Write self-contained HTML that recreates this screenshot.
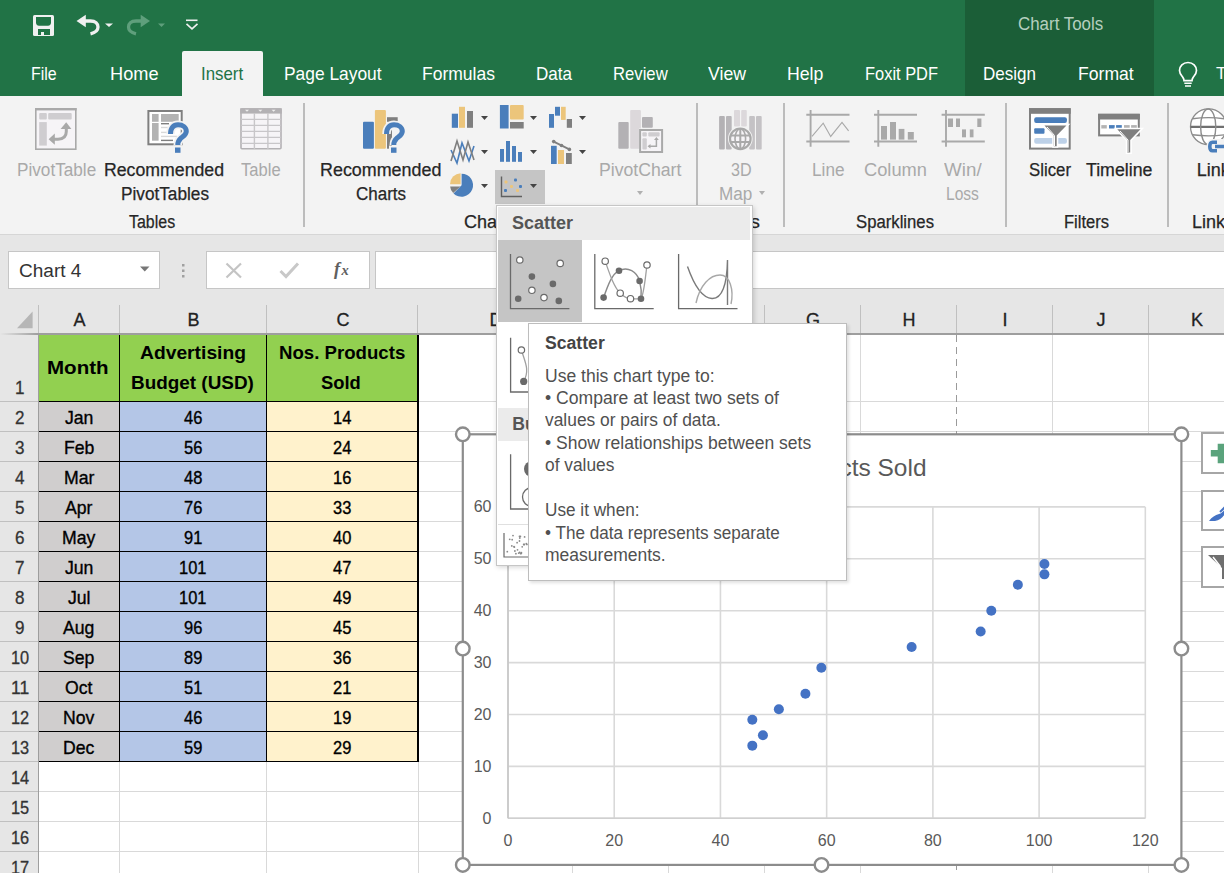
<!DOCTYPE html><html><head><meta charset="utf-8"><style>
html,body{margin:0;padding:0;}
body{width:1224px;height:873px;overflow:hidden;position:relative;background:#ffffff;font-family:"Liberation Sans",sans-serif;}
.t{position:absolute;white-space:nowrap;line-height:1;transform-origin:0 0;}
.r{position:absolute;box-sizing:border-box;}
.s{position:absolute;overflow:visible;}
</style></head><body>
<div class="r" style="left:0px;top:0px;width:1224px;height:96px;background:#217346;"></div>
<div class="r" style="left:965px;top:0px;width:189px;height:96px;background:#1b5e37;"></div>
<div class="r" style="left:182px;top:51px;width:81px;height:45px;background:#f3f3f3;border-radius:2px 2px 0 0;"></div>
<div class="t" style="left:31.40px;top:63.82px;font-size:19px;color:#ffffff;transform:scaleX(0.8394);">File</div>
<div class="t" style="left:110.30px;top:63.82px;font-size:19px;color:#ffffff;transform:scaleX(0.9569);">Home</div>
<div class="t" style="left:283.70px;top:63.82px;font-size:19px;color:#ffffff;transform:scaleX(0.9147);">Page Layout</div>
<div class="t" style="left:422.00px;top:63.82px;font-size:19px;color:#ffffff;transform:scaleX(0.9219);">Formulas</div>
<div class="t" style="left:535.70px;top:63.82px;font-size:19px;color:#ffffff;transform:scaleX(0.8970);">Data</div>
<div class="t" style="left:613.00px;top:63.82px;font-size:19px;color:#ffffff;transform:scaleX(0.8780);">Review</div>
<div class="t" style="left:708.00px;top:63.82px;font-size:19px;color:#ffffff;transform:scaleX(0.9304);">View</div>
<div class="t" style="left:787.30px;top:63.82px;font-size:19px;color:#ffffff;transform:scaleX(0.9315);">Help</div>
<div class="t" style="left:865.00px;top:63.82px;font-size:19px;color:#ffffff;transform:scaleX(0.8644);">Foxit PDF</div>
<div class="t" style="left:983.00px;top:63.82px;font-size:19px;color:#ffffff;transform:scaleX(0.8961);">Design</div>
<div class="t" style="left:1077.70px;top:63.82px;font-size:19px;color:#ffffff;transform:scaleX(0.9256);">Format</div>
<div class="t" style="left:200.70px;top:63.82px;font-size:19px;color:#217346;transform:scaleX(0.8860);">Insert</div>
<div class="t" style="left:1017.80px;top:15.06px;font-size:18px;color:#b5cfbf;transform:scaleX(0.9392);">Chart Tools</div>
<div class="t" style="left:1216.00px;top:65.41px;font-size:17px;color:#ffffff;">T</div>
<svg class="s" style="left:30px;top:12px;" width="200" height="28" viewBox="0 0 200 28">
<rect x="3" y="3" width="21" height="21" rx="1.5" fill="#f0f0f0"/>
<path d="M6 5 h15 v5.5 q0 3 -3 3.3 h-9 q-3 -.3 -3 -3.3 z" fill="#217346"/>
<path d="M8 17 h12 v6 h-6 v-3 h-3 v3 h-3 z" fill="#217346"/>
<path d="M46.5 9 L55.8 2.8 V15.2 Z" fill="#f0f0f0"/>
<path d="M54 9 H60.5 C65.5 9 68 11.8 68 15 C68 18.5 65.5 20.6 60.5 21.8" fill="none" stroke="#f0f0f0" stroke-width="3.3"/>
<path d="M75 11.5 h8 l-4 3.5 z" fill="#f0f0f0"/>
<path d="M120 9 L110.7 2.8 V15.2 Z" fill="#5f9f7c"/>
<path d="M112.5 9 H106 C101 9 98.5 11.8 98.5 15 C98.5 18.5 101 20.6 106 21.8" fill="none" stroke="#5f9f7c" stroke-width="3.3"/>
<path d="M128 11.5 h7 l-3.5 3.5 z" fill="#5f9f7c"/>
<path d="M156 8.3 h11.5" stroke="#f0f0f0" stroke-width="1.6"/>
<path d="M156.5 11.8 l5.5 5 l5.5 -5" fill="none" stroke="#f0f0f0" stroke-width="1.6"/>
</svg>
<svg class="s" style="left:1176px;top:60px;" width="24" height="28" viewBox="0 0 24 28"><path d="M12 2.5 c-5 0 -8.5 3.6 -8.5 8 c0 3.2 1.8 5 3.2 6.6 c1 1.2 1.3 2.3 1.3 3.5 h8 c0 -1.2 .3 -2.3 1.3 -3.5 c1.4 -1.6 3.2 -3.4 3.2 -6.6 c0 -4.4 -3.5 -8 -8.5 -8 z" fill="none" stroke="#fff" stroke-width="1.7"/>
<path d="M8.3 23.3 h7.4 M9 26 h6" stroke="#fff" stroke-width="1.6"/></svg>
<div class="r" style="left:0px;top:96px;width:1224px;height:139px;background:#f3f3f3;"></div>
<div class="r" style="left:0px;top:234px;width:1224px;height:1px;background:#d6d6d6;"></div>
<div class="r" style="left:0px;top:235px;width:1224px;height:70px;background:#e6e6e6;"></div>
<div class="r" style="left:302.5px;top:103px;width:2px;height:124px;background:#bcbcbc;"></div>
<div class="r" style="left:696px;top:103px;width:2px;height:124px;background:#bcbcbc;"></div>
<div class="r" style="left:783px;top:103px;width:2px;height:124px;background:#bcbcbc;"></div>
<div class="r" style="left:1005px;top:103px;width:2px;height:124px;background:#bcbcbc;"></div>
<div class="r" style="left:1167px;top:103px;width:2px;height:124px;background:#bcbcbc;"></div>
<div class="t" style="left:16.50px;top:160.56px;font-size:18px;color:#a9a9a9;transform:scaleX(0.9536);">PivotTable</div>
<div class="t" style="left:104.40px;top:160.56px;font-size:18px;color:#262626;transform:scaleX(0.9831);-webkit-text-stroke:0.25px #262626;">Recommended</div>
<div class="t" style="left:121.00px;top:184.56px;font-size:18px;color:#262626;transform:scaleX(0.9560);-webkit-text-stroke:0.25px #262626;">PivotTables</div>
<div class="t" style="left:241.00px;top:160.56px;font-size:18px;color:#a9a9a9;transform:scaleX(0.9202);">Table</div>
<div class="t" style="left:128.70px;top:212.56px;font-size:18px;color:#262626;transform:scaleX(0.8860);-webkit-text-stroke:0.25px #262626;">Tables</div>
<div class="t" style="left:319.60px;top:160.56px;font-size:18px;color:#262626;transform:scaleX(0.9945);-webkit-text-stroke:0.25px #262626;">Recommended</div>
<div class="t" style="left:356.00px;top:184.56px;font-size:18px;color:#262626;transform:scaleX(0.9431);-webkit-text-stroke:0.25px #262626;">Charts</div>
<div class="t" style="left:464.00px;top:212.56px;font-size:18px;color:#262626;-webkit-text-stroke:0.25px #262626;">Charts</div>
<div class="t" style="left:598.60px;top:160.56px;font-size:18px;color:#a9a9a9;transform:scaleX(0.9805);">PivotChart</div>
<div class="t" style="left:730.70px;top:160.56px;font-size:18px;color:#a9a9a9;transform:scaleX(0.8952);">3D</div>
<div class="t" style="left:718.70px;top:184.56px;font-size:18px;color:#a9a9a9;transform:scaleX(0.9510);">Map</div>
<div class="t" style="left:714.00px;top:212.56px;font-size:18px;color:#262626;transform:scaleX(1.0451);-webkit-text-stroke:0.25px #262626;">Tours</div>
<div class="t" style="left:812.30px;top:160.56px;font-size:18px;color:#a9a9a9;transform:scaleX(0.9550);">Line</div>
<div class="t" style="left:863.60px;top:160.56px;font-size:18px;color:#a9a9a9;transform:scaleX(1.0157);">Column</div>
<div class="t" style="left:944.40px;top:160.56px;font-size:18px;color:#a9a9a9;transform:scaleX(1.0444);">Win/</div>
<div class="t" style="left:946.30px;top:184.56px;font-size:18px;color:#a9a9a9;transform:scaleX(0.8653);">Loss</div>
<div class="t" style="left:856.00px;top:212.56px;font-size:18px;color:#262626;transform:scaleX(0.9281);-webkit-text-stroke:0.25px #262626;">Sparklines</div>
<div class="t" style="left:1029.00px;top:160.56px;font-size:18px;color:#262626;transform:scaleX(0.9331);-webkit-text-stroke:0.25px #262626;">Slicer</div>
<div class="t" style="left:1085.60px;top:160.56px;font-size:18px;color:#262626;transform:scaleX(0.9858);-webkit-text-stroke:0.25px #262626;">Timeline</div>
<div class="t" style="left:1064.40px;top:212.56px;font-size:18px;color:#262626;transform:scaleX(0.9184);-webkit-text-stroke:0.25px #262626;">Filters</div>
<div class="t" style="left:1196.70px;top:160.56px;font-size:18px;color:#262626;-webkit-text-stroke:0.25px #262626;">Link</div>
<div class="t" style="left:1192.00px;top:212.56px;font-size:18px;color:#262626;-webkit-text-stroke:0.25px #262626;">Links</div>
<svg class="s" style="left:636.5px;top:190.8px;" width="6" height="4" viewBox="0 0 6 4"><path d="M0 0 h6 l-3.0 4 z" fill="#b0b0b0"/></svg>
<svg class="s" style="left:758.5px;top:190.8px;" width="6" height="4" viewBox="0 0 6 4"><path d="M0 0 h6 l-3.0 4 z" fill="#b0b0b0"/></svg>
<svg class="s" style="left:0px;top:0px;" width="1224" height="240" viewBox="0 0 1224 240">
<!-- PivotTable disabled -->
<rect x="35.8" y="108.8" width="40" height="40.4" fill="#f6f4f7" stroke="#a9a9a9" stroke-width="1.6"/>
<rect x="35" y="108" width="41.6" height="2.4" fill="#a9a9a9"/>
<rect x="39.2" y="113" width="7.6" height="6.6" rx="1" fill="#cfcdd0"/>
<rect x="48.2" y="113" width="23.5" height="6.6" rx="1" fill="#cfcdd0"/>
<rect x="39.2" y="122.1" width="7.6" height="23.5" fill="#cfcdd0"/>
<path d="M66.3 125 V131.5 Q66.3 139 58 139.3 H51" fill="none" stroke="#a9a9a9" stroke-width="3"/>
<path d="M60.6 129 L66.2 122.2 L71.4 129 Z" fill="#a9a9a9"/>
<path d="M54.8 133.6 L48.6 139.2 L54.8 144.8 Z" fill="#a9a9a9"/>
<!-- Recommended PivotTables -->
<rect x="148.4" y="111" width="33.3" height="33.3" fill="#fff" stroke="#7f7f7f" stroke-width="2"/>
<rect x="152" y="114" width="6.6" height="7.8" fill="#b3b3b3"/>
<rect x="161" y="114" width="17.7" height="7.8" fill="#b3b3b3"/>
<rect x="152" y="123" width="6.6" height="17.7" fill="#b3b3b3"/>
<rect x="161" y="123" width="8" height="1.4" fill="#7f7f7f"/>
<rect x="161" y="126.8" width="7" height="1.4" fill="#d9d9d9"/>
<rect x="161" y="131.7" width="6" height="1.4" fill="#d9d9d9"/>
<rect x="161" y="135.7" width="16" height="1.4" fill="#d9d9d9"/>
<rect x="161" y="139.7" width="12" height="1.4" fill="#7f7f7f"/>
<rect x="166" y="122" width="26" height="33" fill="#f3f3f3" opacity="0"/>
<path d="M170.5 134 C170.5 128 173.5 124.8 178 124.8 C183 124.8 186.3 127.6 186.3 131.3 C186.3 135.3 182.5 136.6 180.5 138.6 C178.7 140.3 177.8 141.3 177.8 145" fill="none" stroke="#f3f3f3" stroke-width="8.5" stroke-linejoin="round"/><rect x="173" y="145.5" width="9.5" height="9.3" fill="#f3f3f3"/>
<path d="M170.5 134 C170.5 128 173.5 124.8 178 124.8 C183 124.8 186.3 127.6 186.3 131.3 C186.3 135.3 182.5 136.6 180.5 138.6 C178.7 140.3 177.8 141.3 177.8 145" fill="none" stroke="#4a7ebb" stroke-width="5"/><rect x="175" y="147.5" width="5.5" height="5.3" fill="#4a7ebb"/>
<!-- Recommended Charts -->
<rect x="363" y="121.8" width="10.9" height="26.9" rx="1" fill="#4a7ebb"/>
<rect x="374.9" y="109.9" width="11" height="38.8" rx="1" fill="#ecc57b"/>
<rect x="387" y="117.2" width="10.7" height="4.6" fill="#7f7f7f"/>
<path d="M387 124 H392 V148.7 H387 Z" fill="#7f7f7f"/>
<path d="M386.5 134 C386.5 128 389.5 124.8 394 124.8 C399 124.8 402.3 127.6 402.3 131.3 C402.3 135.3 398.5 136.6 396.5 138.6 C394.7 140.3 393.8 141.3 393.8 145" fill="none" stroke="#f3f3f3" stroke-width="8.5" stroke-linejoin="round"/><rect x="389" y="145.5" width="9.5" height="9.3" fill="#f3f3f3"/>
<path d="M386.5 134 C386.5 128 389.5 124.8 394 124.8 C399 124.8 402.3 127.6 402.3 131.3 C402.3 135.3 398.5 136.6 396.5 138.6 C394.7 140.3 393.8 141.3 393.8 145" fill="none" stroke="#4a7ebb" stroke-width="5"/><rect x="391" y="147.5" width="5.5" height="5.3" fill="#4a7ebb"/>
<!-- small chart icons row1 -->
<rect x="451.8" y="113.7" width="6.2" height="14.1" fill="#4a7ebb"/>
<rect x="459" y="106.8" width="6" height="21" fill="#ecc57b"/>
<rect x="467" y="111" width="6" height="16.8" fill="#7f7f7f"/>
<rect x="499.9" y="105" width="8.7" height="23.5" fill="#4a7ebb"/>
<rect x="510" y="105" width="13.7" height="14.6" rx="1" fill="#ecc57b"/>
<rect x="510" y="122" width="13.7" height="6.5" fill="#7f7f7f"/>
<rect x="549" y="114" width="5" height="13.8" fill="#4a7ebb"/>
<rect x="555" y="106.8" width="5" height="8.9" fill="#4a7ebb"/>
<rect x="561" y="106.8" width="4.7" height="13.1" fill="#ecc57b"/>
<rect x="566.8" y="119" width="5.2" height="8.8" fill="#7f7f7f"/>
<!-- row2 -->
<path d="M451 150 L457 163 L462 143 L469 161 L474 146" fill="none" stroke="#4a7ebb" stroke-width="1.6"/>
<path d="M451 161 L457 141 L463 160 L468 142 L474 160" fill="none" stroke="#7f7f7f" stroke-width="1.6"/>
<rect x="500" y="149" width="4" height="12.8" fill="#4a7ebb"/>
<rect x="506" y="141" width="4" height="20.8" fill="#4a7ebb"/>
<rect x="512" y="146" width="4" height="15.8" fill="#4a7ebb"/>
<rect x="518" y="152" width="4" height="9.8" fill="#4a7ebb"/>
<rect x="551" y="145.8" width="5.7" height="18.2" fill="#4a7ebb"/>
<rect x="558" y="150" width="6" height="14" fill="#ecc57b"/>
<rect x="566" y="153" width="5.8" height="11" fill="#7f7f7f"/>
<path d="M553.7 141.6 L569.4 149.4" stroke="#7f7f7f" stroke-width="1.8"/>
<circle cx="553.7" cy="141.6" r="1.8" fill="#7f7f7f"/><circle cx="561.5" cy="145.5" r="1.8" fill="#7f7f7f"/><circle cx="569.4" cy="149.4" r="1.8" fill="#7f7f7f"/>
<!-- row3 pie -->
<path d="M461.6 185.2 L461.6 173.7 A11.5 11.5 0 1 1 453.5 193.4 Z" fill="#4a7ebb"/>
<path d="M460.6 184.2 L460.6 173.2 A11 11 0 0 0 450 184.2 Z" fill="#ecc57b"/>
<path d="M460.4 186.4 L450.1 186.4 A11 11 0 0 0 453.2 193 Z" fill="#7f7f7f"/>
<!-- scatter button highlight -->
<rect x="495" y="170" width="50" height="34" fill="#c5c5c5"/>
<path d="M501.5 176.5 V196.5 H522" fill="none" stroke="#606060" stroke-width="1.4"/>
<rect x="504.5" y="180.5" width="3" height="3" rx="1" fill="#ecc57b"/>
<rect x="510" y="185" width="3" height="3" rx="1" fill="#ecc57b"/>
<rect x="516" y="189" width="3" height="3" rx="1" fill="#ecc57b"/>
<rect x="514" y="178.5" width="3" height="3" rx="1" fill="#4a7ebb"/>
<rect x="519" y="185" width="3" height="3" rx="1" fill="#4a7ebb"/>
<rect x="504" y="189" width="3" height="3" rx="1" fill="#4a7ebb"/>
<!-- PivotChart disabled -->
<rect x="618.3" y="121.9" width="10.4" height="26.8" rx="1" fill="#b3b1b4"/>
<rect x="630.2" y="110" width="10.7" height="38.7" rx="1" fill="#dcd8db"/>
<rect x="642" y="117.1" width="10.8" height="10.7" rx="1" fill="#b3b1b4"/>
<rect x="639" y="128.5" width="24.5" height="24.5" fill="#f3f3f3"/>
<rect x="640.1" y="130" width="22" height="22" fill="#f6f4f7" stroke="#a9a9a9" stroke-width="2"/>
<rect x="642.4" y="132.3" width="4.4" height="4.2" rx="1" fill="#cfcdd0"/>
<rect x="648.3" y="132.3" width="11.3" height="4.2" rx="1" fill="#cfcdd0"/>
<rect x="642.4" y="138.2" width="4.4" height="11.4" rx="1" fill="#cfcdd0"/>
<path d="M656.4 139.5 V146.3 H649.5" fill="none" stroke="#a9a9a9" stroke-width="1.5"/>
<path d="M654 140 L656.4 137 L658.8 140 Z M650.5 144 L647.5 146.3 L650.5 148.6 Z" fill="#a9a9a9"/>
<!-- 3D Map disabled -->
<rect x="719.1" y="115.9" width="5.7" height="33.7" rx="1" fill="#b3b1b4"/>
<rect x="726" y="115.9" width="5.7" height="33.7" rx="1" fill="#b8b6b9"/>
<rect x="734" y="110" width="6" height="16.6" rx="1" fill="#dcd8db"/>
<rect x="741.2" y="110" width="5.6" height="16.6" rx="1" fill="#dcd8db"/>
<rect x="749.2" y="115.9" width="5.7" height="33.7" rx="1" fill="#c4c2c5"/>
<rect x="756" y="115.9" width="5.7" height="33.7" rx="1" fill="#c4c2c5"/>
<circle cx="740.3" cy="138.8" r="12.3" fill="#f3f3f3"/>
<circle cx="740.3" cy="138.8" r="10.3" fill="#f6f4f7" stroke="#a9a9a9" stroke-width="2.2"/>
<path d="M730 135.5 H750.6 M730 142 H750.6 M740.3 128.5 V149" stroke="#a9a9a9" stroke-width="2"/>
<ellipse cx="740.3" cy="138.8" rx="5.3" ry="10" fill="none" stroke="#a9a9a9" stroke-width="1.6"/>
<!-- sparklines disabled -->
<g stroke="#a9a9a9" fill="none" stroke-width="1.9">
<path d="M806.3 114.8 H849.5 M806.3 141.5 H849.5 M810.6 110 V146.7"/>
<path d="M874 114.8 H917 M874 141.5 H917 M878.3 110 V146.7"/>
<path d="M941.6 114.8 H984.8 M941.6 141.5 H984.8 M946 110 V146.7"/>
<path d="M812 136.4 L823.2 123.2 L830.7 136.4 L842 122.3 L848.6 130.8" stroke-width="1.1"/>
</g>
<g fill="#a9a9a9">
<rect x="881" y="126" width="6" height="13.6"/><rect x="890" y="122" width="6" height="17.6"/><rect x="898.7" y="128.9" width="5.7" height="10.7"/><rect x="907.8" y="132" width="6" height="7.6"/>
<rect x="948" y="118.5" width="5" height="8.5"/><rect x="956" y="118.5" width="4" height="8.5"/><rect x="962" y="129.4" width="4" height="7.9"/><rect x="969.8" y="129.4" width="3.7" height="7.9"/><rect x="977.3" y="118.5" width="4.1" height="8.5"/>
</g>
<!-- Slicer -->
<rect x="1030" y="109.2" width="39.7" height="39.4" fill="#fff" stroke="#7f7f7f" stroke-width="2"/>
<rect x="1029" y="108.2" width="41.7" height="5.6" fill="#7f7f7f"/>
<rect x="1034.2" y="117.2" width="32.7" height="5.7" rx="2" fill="#4a7ebb"/>
<rect x="1034.2" y="128.2" width="10.3" height="5.6" rx="1" fill="#4a7ebb"/>
<rect x="1034.2" y="137.9" width="32.7" height="5.8" rx="2" fill="#bdd1e8"/>
<path d="M1042.5 124.6 H1068.5 L1057.5 135.8 V147 H1053 V135.8 Z" fill="#7f7f7f" stroke="#fff" stroke-width="1.6"/><path d="M1047 127 L1054.5 135.5 V146" fill="none" stroke="#fff" stroke-width="1"/>
<!-- Timeline -->
<rect x="1099.1" y="114.8" width="39.7" height="20.6" fill="#fff" stroke="#7f7f7f" stroke-width="2"/>
<rect x="1098.1" y="113.8" width="41.7" height="5.7" fill="#7f7f7f"/>
<rect x="1101.3" y="125.1" width="5.5" height="3.4" fill="#b3b3b3"/>
<rect x="1109" y="125.1" width="5.7" height="3.4" fill="#4a7ebb"/>
<rect x="1116.1" y="125.1" width="5.7" height="3.4" fill="#4a7ebb"/>
<rect x="1124" y="125.1" width="5.7" height="3.4" fill="#b3b3b3"/>
<rect x="1131.1" y="125.1" width="5.7" height="3.4" fill="#b3b3b3"/>
<path d="M1115.5 128.5 H1142.3 L1131 140.3 V153.2 H1126.5 V140.3 Z" fill="#7f7f7f" stroke="#fff" stroke-width="1.6"/><path d="M1120 131 L1128 140 V152" fill="none" stroke="#fff" stroke-width="1"/>
<!-- Links globe -->
<circle cx="1208.5" cy="126.8" r="18" fill="#ffffff" stroke="#8c8c8c" stroke-width="1.3"/>
<path d="M1190.5 126.8 H1226.5" stroke="#707070" stroke-width="2.2"/>
<path d="M1192.5 118.8 Q1208.5 116.5 1224.5 118.8 M1192.5 134.8 Q1208.5 137 1224.5 134.8" fill="none" stroke="#8c8c8c" stroke-width="1.4"/>
<ellipse cx="1208.2" cy="126.8" rx="7.6" ry="17.8" fill="none" stroke="#8c8c8c" stroke-width="1.4"/>
<path d="M1213 140 H1222 Q1227 140 1227 146.5 Q1227 153 1222 153 H1213 Q1207.5 153 1207.5 146.5 Q1207.5 140 1213 140 Z" fill="#f3f3f3" stroke="#f3f3f3" stroke-width="2"/>
<path d="M1217 142.3 H1212.5 Q1209.8 142.3 1209.8 146.5 Q1209.8 150.7 1212.5 150.7 H1217 M1215 146.5 H1224" fill="none" stroke="#4a7ebb" stroke-width="3.6"/>
</svg>
<svg class="s" style="left:480.5px;top:115.5px;" width="7" height="4" viewBox="0 0 7 4"><path d="M0 0 h7 l-3.5 4 z" fill="#444444"/></svg>
<svg class="s" style="left:529.8px;top:115.5px;" width="7" height="4" viewBox="0 0 7 4"><path d="M0 0 h7 l-3.5 4 z" fill="#444444"/></svg>
<svg class="s" style="left:579.0px;top:115.5px;" width="7" height="4" viewBox="0 0 7 4"><path d="M0 0 h7 l-3.5 4 z" fill="#444444"/></svg>
<svg class="s" style="left:480.5px;top:150px;" width="7" height="4" viewBox="0 0 7 4"><path d="M0 0 h7 l-3.5 4 z" fill="#444444"/></svg>
<svg class="s" style="left:529.8px;top:150px;" width="7" height="4" viewBox="0 0 7 4"><path d="M0 0 h7 l-3.5 4 z" fill="#444444"/></svg>
<svg class="s" style="left:579.0px;top:150px;" width="7" height="4" viewBox="0 0 7 4"><path d="M0 0 h7 l-3.5 4 z" fill="#444444"/></svg>
<svg class="s" style="left:480.5px;top:183.5px;" width="7" height="4" viewBox="0 0 7 4"><path d="M0 0 h7 l-3.5 4 z" fill="#444444"/></svg>
<svg class="s" style="left:529.8px;top:183.5px;" width="7" height="4" viewBox="0 0 7 4"><path d="M0 0 h7 l-3.5 4 z" fill="#444444"/></svg>
<svg class="s" style="left:0px;top:0px;" width="1224" height="240" viewBox="0 0 1224 240">
<rect x="241" y="109" width="40" height="39.8" rx="1" fill="#f6f4f7" stroke="#b3b1b4" stroke-width="1.6"/>
<rect x="240.2" y="108.2" width="41.6" height="5.4" fill="#b3b1b4"/>
<path d="M254.4 113 V149 M267.9 113 V149" stroke="#c8c6c9" stroke-width="1.4"/>
<path d="M241 119.3 H281 M241 125.4 H281 M241 131.4 H281 M241 137.4 H281 M241 143.3 H281" stroke="#c8c6c9" stroke-width="1.2"/>
<path d="M245 109.8 h4 l-2 2 z M258.3 109.8 h4 l-2 2 z M271.6 109.8 h4 l-2 2 z" fill="#eeeeee"/>
</svg>
<div class="r" style="left:8px;top:251px;width:152px;height:38px;background:#ffffff;border:1px solid #c6c6c6;"></div>
<div class="t" style="left:19.30px;top:262.46px;font-size:18px;color:#333333;transform:scaleX(1.0571);">Chart 4</div>
<svg class="s" style="left:140px;top:266px;" width="10" height="6" viewBox="0 0 10 6"><path d="M0 0.5 H9.5 L4.75 5.5 Z" fill="#777"/></svg>
<svg class="s" style="left:181px;top:262px;" width="5" height="17" viewBox="0 0 5 17"><rect x="1" y="2" width="2.5" height="2.5" fill="#a0a0a0"/><rect x="1" y="7.5" width="2.5" height="2.5" fill="#a0a0a0"/><rect x="1" y="13" width="2.5" height="2.5" fill="#a0a0a0"/></svg>
<div class="r" style="left:206px;top:251px;width:164px;height:38px;background:#ffffff;border:1px solid #c6c6c6;"></div>
<svg class="s" style="left:220px;top:257px;" width="140" height="26" viewBox="0 0 140 26"><path d="M6.5 6.5 L21 20.5 M21 6.5 L6.5 20.5" stroke="#c4c4c4" stroke-width="2.2"/>
<path d="M60.5 14 L66 19.5 L78 6.5" fill="none" stroke="#c8c8c8" stroke-width="3"/></svg>
<div class="t" style="left:334.00px;top:259.76px;font-size:18px;color:#606060;font-weight:bold;font-family:'Liberation Serif',serif;font-style:italic;">f</div>
<div class="t" style="left:341.50px;top:263.23px;font-size:14.5px;color:#606060;font-weight:bold;font-family:'Liberation Serif',serif;font-style:italic;">x</div>
<div class="r" style="left:375px;top:251px;width:900px;height:38px;background:#ffffff;border:1px solid #c6c6c6;"></div>
<div class="r" style="left:0px;top:305px;width:1224px;height:28px;background:#e6e6e6;"></div>
<div class="r" style="left:0px;top:335px;width:38px;height:538px;background:#e6e6e6;"></div>
<div class="r" style="left:38px;top:333px;width:1186px;height:2px;background:#9e9e9e;"></div>
<div class="r" style="left:0px;top:333px;width:38px;height:2px;background:linear-gradient(to right,#e6e6e6,#9e9e9e);"></div>
<div class="r" style="left:38px;top:305px;width:1px;height:28px;background:#c0c0c0;"></div>
<div class="r" style="left:119px;top:305px;width:1px;height:28px;background:#c0c0c0;"></div>
<div class="r" style="left:266px;top:305px;width:1px;height:28px;background:#c0c0c0;"></div>
<div class="r" style="left:417px;top:305px;width:1px;height:28px;background:#c0c0c0;"></div>
<div class="r" style="left:572px;top:305px;width:1px;height:28px;background:#c0c0c0;"></div>
<div class="r" style="left:668px;top:305px;width:1px;height:28px;background:#c0c0c0;"></div>
<div class="r" style="left:764px;top:305px;width:1px;height:28px;background:#c0c0c0;"></div>
<div class="r" style="left:860px;top:305px;width:1px;height:28px;background:#c0c0c0;"></div>
<div class="r" style="left:956px;top:305px;width:1px;height:28px;background:#c0c0c0;"></div>
<div class="r" style="left:1052px;top:305px;width:1px;height:28px;background:#c0c0c0;"></div>
<div class="r" style="left:1148px;top:305px;width:1px;height:28px;background:#c0c0c0;"></div>
<div class="r" style="left:1244px;top:305px;width:1px;height:28px;background:#c0c0c0;"></div>
<div class="r" style="left:38px;top:335px;width:1px;height:538px;background:#9e9e9e;"></div>
<svg class="s" style="left:16px;top:311px;" width="18" height="18" viewBox="0 0 18 18"><path d="M1 17.3 L16.6 0.6 V17.3 Z" fill="#b6b6b6"/></svg>
<div class="t" style="left:73.50px;top:310.76px;font-size:18px;color:#222222;transform:scaleX(1.0000);-webkit-text-stroke:0.3px #222;">A</div>
<div class="t" style="left:187.50px;top:310.76px;font-size:18px;color:#222222;transform:scaleX(1.0000);-webkit-text-stroke:0.3px #222;">B</div>
<div class="t" style="left:336.50px;top:310.76px;font-size:18px;color:#222222;transform:scaleX(1.0000);-webkit-text-stroke:0.3px #222;">C</div>
<div class="t" style="left:489.50px;top:310.76px;font-size:18px;color:#222222;transform:scaleX(1.0000);-webkit-text-stroke:0.3px #222;">D</div>
<div class="t" style="left:615.00px;top:310.76px;font-size:18px;color:#222222;transform:scaleX(1.0000);-webkit-text-stroke:0.3px #222;">E</div>
<div class="t" style="left:711.50px;top:310.76px;font-size:18px;color:#222222;transform:scaleX(1.0000);-webkit-text-stroke:0.3px #222;">F</div>
<div class="t" style="left:806.00px;top:310.76px;font-size:18px;color:#222222;transform:scaleX(1.0000);-webkit-text-stroke:0.3px #222;">G</div>
<div class="t" style="left:902.50px;top:310.76px;font-size:18px;color:#222222;transform:scaleX(1.0000);-webkit-text-stroke:0.3px #222;">H</div>
<div class="t" style="left:1002.50px;top:310.76px;font-size:18px;color:#222222;transform:scaleX(1.0000);-webkit-text-stroke:0.3px #222;">I</div>
<div class="t" style="left:1096.50px;top:310.76px;font-size:18px;color:#222222;transform:scaleX(1.0000);-webkit-text-stroke:0.3px #222;">J</div>
<div class="t" style="left:1191.00px;top:310.76px;font-size:18px;color:#222222;transform:scaleX(1.0000);-webkit-text-stroke:0.3px #222;">K</div>
<div class="r" style="left:39px;top:401px;width:1185px;height:1px;background:#d9d9d9;"></div>
<div class="r" style="left:0px;top:401px;width:38px;height:1px;background:#c0c0c0;"></div>
<div class="r" style="left:39px;top:431px;width:1185px;height:1px;background:#d9d9d9;"></div>
<div class="r" style="left:0px;top:431px;width:38px;height:1px;background:#c0c0c0;"></div>
<div class="r" style="left:39px;top:461px;width:1185px;height:1px;background:#d9d9d9;"></div>
<div class="r" style="left:0px;top:461px;width:38px;height:1px;background:#c0c0c0;"></div>
<div class="r" style="left:39px;top:491px;width:1185px;height:1px;background:#d9d9d9;"></div>
<div class="r" style="left:0px;top:491px;width:38px;height:1px;background:#c0c0c0;"></div>
<div class="r" style="left:39px;top:521px;width:1185px;height:1px;background:#d9d9d9;"></div>
<div class="r" style="left:0px;top:521px;width:38px;height:1px;background:#c0c0c0;"></div>
<div class="r" style="left:39px;top:551px;width:1185px;height:1px;background:#d9d9d9;"></div>
<div class="r" style="left:0px;top:551px;width:38px;height:1px;background:#c0c0c0;"></div>
<div class="r" style="left:39px;top:581px;width:1185px;height:1px;background:#d9d9d9;"></div>
<div class="r" style="left:0px;top:581px;width:38px;height:1px;background:#c0c0c0;"></div>
<div class="r" style="left:39px;top:611px;width:1185px;height:1px;background:#d9d9d9;"></div>
<div class="r" style="left:0px;top:611px;width:38px;height:1px;background:#c0c0c0;"></div>
<div class="r" style="left:39px;top:641px;width:1185px;height:1px;background:#d9d9d9;"></div>
<div class="r" style="left:0px;top:641px;width:38px;height:1px;background:#c0c0c0;"></div>
<div class="r" style="left:39px;top:671px;width:1185px;height:1px;background:#d9d9d9;"></div>
<div class="r" style="left:0px;top:671px;width:38px;height:1px;background:#c0c0c0;"></div>
<div class="r" style="left:39px;top:701px;width:1185px;height:1px;background:#d9d9d9;"></div>
<div class="r" style="left:0px;top:701px;width:38px;height:1px;background:#c0c0c0;"></div>
<div class="r" style="left:39px;top:731px;width:1185px;height:1px;background:#d9d9d9;"></div>
<div class="r" style="left:0px;top:731px;width:38px;height:1px;background:#c0c0c0;"></div>
<div class="r" style="left:39px;top:761px;width:1185px;height:1px;background:#d9d9d9;"></div>
<div class="r" style="left:0px;top:761px;width:38px;height:1px;background:#c0c0c0;"></div>
<div class="r" style="left:39px;top:791px;width:1185px;height:1px;background:#d9d9d9;"></div>
<div class="r" style="left:0px;top:791px;width:38px;height:1px;background:#c0c0c0;"></div>
<div class="r" style="left:39px;top:821px;width:1185px;height:1px;background:#d9d9d9;"></div>
<div class="r" style="left:0px;top:821px;width:38px;height:1px;background:#c0c0c0;"></div>
<div class="r" style="left:39px;top:851px;width:1185px;height:1px;background:#d9d9d9;"></div>
<div class="r" style="left:0px;top:851px;width:38px;height:1px;background:#c0c0c0;"></div>
<div class="r" style="left:39px;top:881px;width:1185px;height:1px;background:#d9d9d9;"></div>
<div class="r" style="left:0px;top:881px;width:38px;height:1px;background:#c0c0c0;"></div>
<div class="r" style="left:119px;top:335px;width:1px;height:538px;background:#d9d9d9;"></div>
<div class="r" style="left:266px;top:335px;width:1px;height:538px;background:#d9d9d9;"></div>
<div class="r" style="left:418px;top:335px;width:1px;height:538px;background:#d9d9d9;"></div>
<div class="r" style="left:572px;top:335px;width:1px;height:538px;background:#d9d9d9;"></div>
<div class="r" style="left:668px;top:335px;width:1px;height:538px;background:#d9d9d9;"></div>
<div class="r" style="left:764px;top:335px;width:1px;height:538px;background:#d9d9d9;"></div>
<div class="r" style="left:860px;top:335px;width:1px;height:538px;background:#d9d9d9;"></div>
<div class="r" style="left:956px;top:335px;width:1px;height:538px;background:repeating-linear-gradient(to bottom,#9a9a9a 0 7px,#ffffff 7px 12px);"></div>
<div class="r" style="left:1052px;top:335px;width:1px;height:538px;background:#d9d9d9;"></div>
<div class="r" style="left:1148px;top:335px;width:1px;height:538px;background:#d9d9d9;"></div>
<div class="r" style="left:1244px;top:335px;width:1px;height:538px;background:#d9d9d9;"></div>
<div class="t" style="left:14.75px;top:379.06px;font-size:18.6px;color:#333333;transform:scaleX(0.9183);-webkit-text-stroke:0.3px #333;">1</div>
<div class="t" style="left:14.75px;top:409.06px;font-size:18.6px;color:#333333;transform:scaleX(0.9183);-webkit-text-stroke:0.3px #333;">2</div>
<div class="t" style="left:14.75px;top:439.06px;font-size:18.6px;color:#333333;transform:scaleX(0.9183);-webkit-text-stroke:0.3px #333;">3</div>
<div class="t" style="left:14.75px;top:469.06px;font-size:18.6px;color:#333333;transform:scaleX(0.9183);-webkit-text-stroke:0.3px #333;">4</div>
<div class="t" style="left:14.75px;top:499.06px;font-size:18.6px;color:#333333;transform:scaleX(0.9183);-webkit-text-stroke:0.3px #333;">5</div>
<div class="t" style="left:14.75px;top:529.06px;font-size:18.6px;color:#333333;transform:scaleX(0.9183);-webkit-text-stroke:0.3px #333;">6</div>
<div class="t" style="left:14.75px;top:559.06px;font-size:18.6px;color:#333333;transform:scaleX(0.9183);-webkit-text-stroke:0.3px #333;">7</div>
<div class="t" style="left:14.75px;top:589.06px;font-size:18.6px;color:#333333;transform:scaleX(0.9183);-webkit-text-stroke:0.3px #333;">8</div>
<div class="t" style="left:14.75px;top:619.06px;font-size:18.6px;color:#333333;transform:scaleX(0.9183);-webkit-text-stroke:0.3px #333;">9</div>
<div class="t" style="left:11.40px;top:649.06px;font-size:18.6px;color:#333333;transform:scaleX(0.8797);-webkit-text-stroke:0.3px #333;">10</div>
<div class="t" style="left:11.40px;top:679.06px;font-size:18.6px;color:#333333;transform:scaleX(0.9426);-webkit-text-stroke:0.3px #333;">11</div>
<div class="t" style="left:11.40px;top:709.06px;font-size:18.6px;color:#333333;transform:scaleX(0.8797);-webkit-text-stroke:0.3px #333;">12</div>
<div class="t" style="left:11.40px;top:739.06px;font-size:18.6px;color:#333333;transform:scaleX(0.8797);-webkit-text-stroke:0.3px #333;">13</div>
<div class="t" style="left:11.40px;top:769.06px;font-size:18.6px;color:#333333;transform:scaleX(0.8797);-webkit-text-stroke:0.3px #333;">14</div>
<div class="t" style="left:11.40px;top:799.06px;font-size:18.6px;color:#333333;transform:scaleX(0.8797);-webkit-text-stroke:0.3px #333;">15</div>
<div class="t" style="left:11.40px;top:829.06px;font-size:18.6px;color:#333333;transform:scaleX(0.8797);-webkit-text-stroke:0.3px #333;">16</div>
<div class="t" style="left:11.40px;top:859.06px;font-size:18.6px;color:#333333;transform:scaleX(0.8797);-webkit-text-stroke:0.3px #333;">17</div>
<div class="r" style="left:39px;top:335px;width:380px;height:66px;background:#92d050;"></div>
<div class="r" style="left:39px;top:402px;width:80px;height:360px;background:#d0cece;"></div>
<div class="r" style="left:120px;top:402px;width:146px;height:360px;background:#b4c6e7;"></div>
<div class="r" style="left:267px;top:402px;width:151px;height:360px;background:#fff2cc;"></div>
<div class="r" style="left:39px;top:401px;width:380px;height:1px;background:#000000;"></div>
<div class="r" style="left:39px;top:431px;width:380px;height:1px;background:#000000;"></div>
<div class="r" style="left:39px;top:461px;width:380px;height:1px;background:#000000;"></div>
<div class="r" style="left:39px;top:491px;width:380px;height:1px;background:#000000;"></div>
<div class="r" style="left:39px;top:521px;width:380px;height:1px;background:#000000;"></div>
<div class="r" style="left:39px;top:551px;width:380px;height:1px;background:#000000;"></div>
<div class="r" style="left:39px;top:581px;width:380px;height:1px;background:#000000;"></div>
<div class="r" style="left:39px;top:611px;width:380px;height:1px;background:#000000;"></div>
<div class="r" style="left:39px;top:641px;width:380px;height:1px;background:#000000;"></div>
<div class="r" style="left:39px;top:671px;width:380px;height:1px;background:#000000;"></div>
<div class="r" style="left:39px;top:701px;width:380px;height:1px;background:#000000;"></div>
<div class="r" style="left:39px;top:731px;width:380px;height:1px;background:#000000;"></div>
<div class="r" style="left:39px;top:761px;width:380px;height:1px;background:#000000;"></div>
<div class="r" style="left:119px;top:335px;width:1px;height:427px;background:#000000;"></div>
<div class="r" style="left:266px;top:335px;width:1px;height:427px;background:#000000;"></div>
<div class="r" style="left:417px;top:335px;width:2px;height:427px;background:#000000;"></div>
<div class="t" style="left:47.40px;top:359.36px;font-size:18px;color:#000;font-weight:bold;transform:scaleX(1.1412);">Month</div>
<div class="t" style="left:140.00px;top:344.06px;font-size:18px;color:#000;font-weight:bold;transform:scaleX(1.0705);">Advertising</div>
<div class="t" style="left:131.40px;top:374.36px;font-size:18px;color:#000;font-weight:bold;transform:scaleX(1.0505);">Budget (USD)</div>
<div class="t" style="left:278.60px;top:344.06px;font-size:18px;color:#000;font-weight:bold;transform:scaleX(1.0351);">Nos. Products</div>
<div class="t" style="left:321.20px;top:374.36px;font-size:18px;color:#000;font-weight:bold;transform:scaleX(1.0206);">Sold</div>
<div class="t" style="left:64.78px;top:409.26px;font-size:18.6px;color:#000;transform:scaleX(0.9484);-webkit-text-stroke:0.35px #000;">Jan</div>
<div class="t" style="left:183.84px;top:409.26px;font-size:18.6px;color:#000;transform:scaleX(0.8855);-webkit-text-stroke:0.35px #000;">46</div>
<div class="t" style="left:333.34px;top:409.26px;font-size:18.6px;color:#000;transform:scaleX(0.8855);-webkit-text-stroke:0.35px #000;">14</div>
<div class="t" style="left:63.80px;top:439.26px;font-size:18.6px;color:#000;transform:scaleX(0.9484);-webkit-text-stroke:0.35px #000;">Feb</div>
<div class="t" style="left:183.84px;top:439.26px;font-size:18.6px;color:#000;transform:scaleX(0.8855);-webkit-text-stroke:0.35px #000;">56</div>
<div class="t" style="left:333.34px;top:439.26px;font-size:18.6px;color:#000;transform:scaleX(0.8855);-webkit-text-stroke:0.35px #000;">24</div>
<div class="t" style="left:63.81px;top:469.26px;font-size:18.6px;color:#000;transform:scaleX(0.9484);-webkit-text-stroke:0.35px #000;">Mar</div>
<div class="t" style="left:183.84px;top:469.26px;font-size:18.6px;color:#000;transform:scaleX(0.8855);-webkit-text-stroke:0.35px #000;">48</div>
<div class="t" style="left:333.34px;top:469.26px;font-size:18.6px;color:#000;transform:scaleX(0.8855);-webkit-text-stroke:0.35px #000;">16</div>
<div class="t" style="left:65.27px;top:499.26px;font-size:18.6px;color:#000;transform:scaleX(0.9484);-webkit-text-stroke:0.35px #000;">Apr</div>
<div class="t" style="left:183.84px;top:499.26px;font-size:18.6px;color:#000;transform:scaleX(0.8855);-webkit-text-stroke:0.35px #000;">76</div>
<div class="t" style="left:333.34px;top:499.26px;font-size:18.6px;color:#000;transform:scaleX(0.8855);-webkit-text-stroke:0.35px #000;">33</div>
<div class="t" style="left:62.34px;top:529.26px;font-size:18.6px;color:#000;transform:scaleX(0.9484);-webkit-text-stroke:0.35px #000;">May</div>
<div class="t" style="left:183.84px;top:529.26px;font-size:18.6px;color:#000;transform:scaleX(0.8855);-webkit-text-stroke:0.35px #000;">91</div>
<div class="t" style="left:333.34px;top:529.26px;font-size:18.6px;color:#000;transform:scaleX(0.8855);-webkit-text-stroke:0.35px #000;">40</div>
<div class="t" style="left:64.78px;top:559.26px;font-size:18.6px;color:#000;transform:scaleX(0.9484);-webkit-text-stroke:0.35px #000;">Jun</div>
<div class="t" style="left:179.26px;top:559.26px;font-size:18.6px;color:#000;transform:scaleX(0.8855);-webkit-text-stroke:0.35px #000;">101</div>
<div class="t" style="left:333.34px;top:559.26px;font-size:18.6px;color:#000;transform:scaleX(0.8855);-webkit-text-stroke:0.35px #000;">47</div>
<div class="t" style="left:67.72px;top:589.26px;font-size:18.6px;color:#000;transform:scaleX(0.9484);-webkit-text-stroke:0.35px #000;">Jul</div>
<div class="t" style="left:179.26px;top:589.26px;font-size:18.6px;color:#000;transform:scaleX(0.8855);-webkit-text-stroke:0.35px #000;">101</div>
<div class="t" style="left:333.34px;top:589.26px;font-size:18.6px;color:#000;transform:scaleX(0.8855);-webkit-text-stroke:0.35px #000;">49</div>
<div class="t" style="left:63.31px;top:619.26px;font-size:18.6px;color:#000;transform:scaleX(0.9484);-webkit-text-stroke:0.35px #000;">Aug</div>
<div class="t" style="left:183.84px;top:619.26px;font-size:18.6px;color:#000;transform:scaleX(0.8855);-webkit-text-stroke:0.35px #000;">96</div>
<div class="t" style="left:333.34px;top:619.26px;font-size:18.6px;color:#000;transform:scaleX(0.8855);-webkit-text-stroke:0.35px #000;">45</div>
<div class="t" style="left:63.31px;top:649.26px;font-size:18.6px;color:#000;transform:scaleX(0.9484);-webkit-text-stroke:0.35px #000;">Sep</div>
<div class="t" style="left:183.84px;top:649.26px;font-size:18.6px;color:#000;transform:scaleX(0.8855);-webkit-text-stroke:0.35px #000;">89</div>
<div class="t" style="left:333.34px;top:649.26px;font-size:18.6px;color:#000;transform:scaleX(0.8855);-webkit-text-stroke:0.35px #000;">36</div>
<div class="t" style="left:65.28px;top:679.26px;font-size:18.6px;color:#000;transform:scaleX(0.9484);-webkit-text-stroke:0.35px #000;">Oct</div>
<div class="t" style="left:183.84px;top:679.26px;font-size:18.6px;color:#000;transform:scaleX(0.8855);-webkit-text-stroke:0.35px #000;">51</div>
<div class="t" style="left:333.34px;top:679.26px;font-size:18.6px;color:#000;transform:scaleX(0.8855);-webkit-text-stroke:0.35px #000;">21</div>
<div class="t" style="left:63.31px;top:709.26px;font-size:18.6px;color:#000;transform:scaleX(0.9484);-webkit-text-stroke:0.35px #000;">Nov</div>
<div class="t" style="left:183.84px;top:709.26px;font-size:18.6px;color:#000;transform:scaleX(0.8855);-webkit-text-stroke:0.35px #000;">46</div>
<div class="t" style="left:333.34px;top:709.26px;font-size:18.6px;color:#000;transform:scaleX(0.8855);-webkit-text-stroke:0.35px #000;">19</div>
<div class="t" style="left:63.31px;top:739.26px;font-size:18.6px;color:#000;transform:scaleX(0.9484);-webkit-text-stroke:0.35px #000;">Dec</div>
<div class="t" style="left:183.84px;top:739.26px;font-size:18.6px;color:#000;transform:scaleX(0.8855);-webkit-text-stroke:0.35px #000;">59</div>
<div class="t" style="left:333.34px;top:739.26px;font-size:18.6px;color:#000;transform:scaleX(0.8855);-webkit-text-stroke:0.35px #000;">29</div>
<div class="r" style="left:463px;top:435px;width:718px;height:429px;background:#ffffff;"></div>
<svg class="s" style="left:0px;top:0px;" width="1224" height="873" viewBox="0 0 1224 873"><path d="M508.0 818.30 H1145.32" stroke="#d9d9d9" stroke-width="1.6"/><path d="M508.0 766.40 H1145.32" stroke="#d9d9d9" stroke-width="1.6"/><path d="M508.0 714.50 H1145.32" stroke="#d9d9d9" stroke-width="1.6"/><path d="M508.0 662.60 H1145.32" stroke="#d9d9d9" stroke-width="1.6"/><path d="M508.0 610.70 H1145.32" stroke="#d9d9d9" stroke-width="1.6"/><path d="M508.0 558.80 H1145.32" stroke="#d9d9d9" stroke-width="1.6"/><path d="M508.0 506.90 H1145.32" stroke="#d9d9d9" stroke-width="1.6"/><path d="M508.00 506.90 V818.30" stroke="#d9d9d9" stroke-width="1.6"/><path d="M614.22 506.90 V818.30" stroke="#d9d9d9" stroke-width="1.6"/><path d="M720.44 506.90 V818.30" stroke="#d9d9d9" stroke-width="1.6"/><path d="M826.66 506.90 V818.30" stroke="#d9d9d9" stroke-width="1.6"/><path d="M932.88 506.90 V818.30" stroke="#d9d9d9" stroke-width="1.6"/><path d="M1039.10 506.90 V818.30" stroke="#d9d9d9" stroke-width="1.6"/><path d="M1145.32 506.90 V818.30" stroke="#d9d9d9" stroke-width="1.6"/><path d="M508.0 818.30 H1145.32" stroke="#d0d0d0" stroke-width="1.6"/><path d="M508.0 506.90 V818.30" stroke="#c8c8c8" stroke-width="1.7"/><circle cx="752.31" cy="745.64" r="5" fill="#4472c4"/><circle cx="805.42" cy="693.74" r="5" fill="#4472c4"/><circle cx="762.93" cy="735.26" r="5" fill="#4472c4"/><circle cx="911.64" cy="647.03" r="5" fill="#4472c4"/><circle cx="991.30" cy="610.70" r="5" fill="#4472c4"/><circle cx="1044.41" cy="574.37" r="5" fill="#4472c4"/><circle cx="1044.41" cy="563.99" r="5" fill="#4472c4"/><circle cx="1017.86" cy="584.75" r="5" fill="#4472c4"/><circle cx="980.68" cy="631.46" r="5" fill="#4472c4"/><circle cx="778.86" cy="709.31" r="5" fill="#4472c4"/><circle cx="752.31" cy="719.69" r="5" fill="#4472c4"/><circle cx="821.35" cy="667.79" r="5" fill="#4472c4"/><rect x="462.8" y="434.3" width="718.6" height="430.6" fill="none" stroke="#8c8c8c" stroke-width="2.2"/><circle cx="462.8" cy="434.3" r="6.8" fill="#ffffff" stroke="#8c8c8c" stroke-width="2.4"/><circle cx="821.5" cy="434.3" r="6.8" fill="#ffffff" stroke="#8c8c8c" stroke-width="2.4"/><circle cx="1181.4" cy="434.3" r="6.8" fill="#ffffff" stroke="#8c8c8c" stroke-width="2.4"/><circle cx="462.8" cy="648.6" r="6.8" fill="#ffffff" stroke="#8c8c8c" stroke-width="2.4"/><circle cx="1181.4" cy="648.6" r="6.8" fill="#ffffff" stroke="#8c8c8c" stroke-width="2.4"/><circle cx="462.8" cy="864.9" r="6.8" fill="#ffffff" stroke="#8c8c8c" stroke-width="2.4"/><circle cx="821.5" cy="864.9" r="6.8" fill="#ffffff" stroke="#8c8c8c" stroke-width="2.4"/><circle cx="1181.4" cy="864.9" r="6.8" fill="#ffffff" stroke="#8c8c8c" stroke-width="2.4"/></svg>
<div class="t" style="left:503.55px;top:832.96px;font-size:16px;color:#595959;transform:scaleX(1.0000);">0</div>
<div class="t" style="left:605.32px;top:832.96px;font-size:16px;color:#595959;transform:scaleX(1.0000);">20</div>
<div class="t" style="left:711.54px;top:832.96px;font-size:16px;color:#595959;transform:scaleX(1.0000);">40</div>
<div class="t" style="left:817.76px;top:832.96px;font-size:16px;color:#595959;transform:scaleX(1.0000);">60</div>
<div class="t" style="left:923.98px;top:832.96px;font-size:16px;color:#595959;transform:scaleX(1.0000);">80</div>
<div class="t" style="left:1025.75px;top:832.96px;font-size:16px;color:#595959;transform:scaleX(1.0000);">100</div>
<div class="t" style="left:1131.97px;top:832.96px;font-size:16px;color:#595959;transform:scaleX(1.0000);">120</div>
<div class="t" style="left:482.60px;top:810.56px;font-size:16px;color:#595959;">0</div>
<div class="t" style="left:473.70px;top:758.66px;font-size:16px;color:#595959;">10</div>
<div class="t" style="left:473.70px;top:706.76px;font-size:16px;color:#595959;">20</div>
<div class="t" style="left:473.70px;top:654.86px;font-size:16px;color:#595959;">30</div>
<div class="t" style="left:473.70px;top:602.96px;font-size:16px;color:#595959;">40</div>
<div class="t" style="left:473.70px;top:551.06px;font-size:16px;color:#595959;">50</div>
<div class="t" style="left:473.70px;top:499.16px;font-size:16px;color:#595959;">60</div>
<div class="t" style="left:717.45px;top:455.88px;font-size:24px;color:#595959;transform:scaleX(1.0198);">Nos. Products Sold</div>
<div class="r" style="left:1200.5px;top:432px;width:40px;height:41.5px;background:#ffffff;border:2px solid #a6a6a6;"></div>
<div class="r" style="left:1200.5px;top:489.7px;width:40px;height:41.5px;background:#ffffff;border:2px solid #a6a6a6;"></div>
<div class="r" style="left:1200.5px;top:546.2px;width:40px;height:41.5px;background:#ffffff;border:2px solid #a6a6a6;"></div>
<svg class="s" style="left:1200px;top:430px;" width="24" height="160" viewBox="0 0 24 160">
<path d="M10.8 23.3 H26 M21 13.7 V33.3" stroke="#5aa37c" stroke-width="6.6"/>
<path d="M9 91 C12 87 15 85 19 84 C22 83 24 81 25 78 L26 80 C25 86 21 90 15 91 Z" fill="#4472c4"/>
<path d="M20 82 L26 76" stroke="#4472c4" stroke-width="2"/>
<path d="M8 125 H26 V149 H22 V138 Z" fill="#6f6f6f"/>
<path d="M13 127 L20 136 V148" fill="none" stroke="#ffffff" stroke-width="1.5"/>
</svg>
<div class="r" style="left:491px;top:205px;width:266px;height:365px;background:rgba(0,0,0,0.0);box-shadow:1px 2px 5px rgba(0,0,0,0.18);left:496px;width:257px;height:360px;"></div>
<div class="r" style="left:496px;top:204.5px;width:257px;height:361px;background:#ffffff;border:1.5px solid #c6c6c6;"></div>
<div class="r" style="left:498px;top:207px;width:252px;height:33px;background:#ebebeb;"></div>
<div class="t" style="left:511.60px;top:214.70px;font-size:17.6px;color:#555555;font-weight:bold;transform:scaleX(1.0238);">Scatter</div>
<div class="r" style="left:498.4px;top:240px;width:83.6px;height:82px;background:#c5c5c5;"></div>
<div class="r" style="left:498px;top:408px;width:252px;height:33px;background:#ebebeb;"></div>
<div class="t" style="left:512.30px;top:416.10px;font-size:17.6px;color:#555555;font-weight:bold;">Bubble</div>
<div class="r" style="left:498px;top:524px;width:252px;height:1.2px;background:#e0e0e0;"></div>
<svg class="s" style="left:0px;top:0px;" width="1224" height="873" viewBox="0 0 1224 873"><path d="M510.5 254 V308.6 H569.4" fill="none" stroke="#6a6a6a" stroke-width="1.3"/><circle cx="531.9" cy="276.6" r="3.3" fill="#6a6a6a"/><circle cx="552.9" cy="283.9" r="3.3" fill="#6a6a6a"/><circle cx="518.2" cy="298.7" r="3.3" fill="#6a6a6a"/><circle cx="558.8" cy="300.9" r="3.3" fill="#6a6a6a"/><circle cx="519.8" cy="260" r="3.2" fill="#fff" stroke="#6a6a6a" stroke-width="1.2"/><circle cx="560.2" cy="263.4" r="3.2" fill="#fff" stroke="#6a6a6a" stroke-width="1.2"/><circle cx="531.9" cy="290.3" r="3.2" fill="#fff" stroke="#6a6a6a" stroke-width="1.2"/><circle cx="544" cy="297.6" r="3.2" fill="#fff" stroke="#6a6a6a" stroke-width="1.2"/><path d="M594.8 254 V308.6 H653.7" fill="none" stroke="#6a6a6a" stroke-width="1.3"/><path d="M603.6 297.6 C608 285 612 274 619 270.7 C628 266 637 272 639.6 281 C641.5 288 641.5 294 641 298.7" fill="none" stroke="#8a8a8a" stroke-width="1.4"/><path d="M605.2 261.2 C610 275 614 287 620.2 293.2 C624 297 627 298.5 630.5 298.7 C634 299 638 299 641 298.7 C644 294 645 280 647 265" fill="none" stroke="#a0a0a0" stroke-width="1.3"/><circle cx="603.6" cy="297.6" r="3.3" fill="#6a6a6a"/><circle cx="619" cy="270.7" r="3.3" fill="#6a6a6a"/><circle cx="639.6" cy="281" r="3.3" fill="#6a6a6a"/><circle cx="641" cy="298.7" r="3.3" fill="#6a6a6a"/><circle cx="605.2" cy="261.2" r="3.2" fill="#fff" stroke="#6a6a6a" stroke-width="1.2"/><circle cx="620.2" cy="293.2" r="3.2" fill="#fff" stroke="#6a6a6a" stroke-width="1.2"/><circle cx="630.5" cy="298.7" r="3.2" fill="#fff" stroke="#6a6a6a" stroke-width="1.2"/><circle cx="647" cy="265" r="3.2" fill="#fff" stroke="#6a6a6a" stroke-width="1.2"/><path d="M678.6 254 V308.6 H737.5" fill="none" stroke="#6a6a6a" stroke-width="1.3"/><path d="M687.5 266.5 C694 285 702 298 712 298.5 C722 299 727 285 727.5 260 V305" fill="none" stroke="#7a7a7a" stroke-width="1.4"/><path d="M696 303 C700 285 710 275 720 275 C730 275 734 290 731 304" fill="none" stroke="#a8a8a8" stroke-width="1.4"/><path d="M510.6 337.7 V392 H569" fill="none" stroke="#6a6a6a" stroke-width="1.3"/><path d="M521.4 350 C525 362 530 370 523.7 381.4" fill="none" stroke="#a0a0a0" stroke-width="1.3"/><circle cx="521.4" cy="350" r="3.2" fill="#fff" stroke="#6a6a6a" stroke-width="1.2"/><circle cx="523.7" cy="381.4" r="3.6" fill="#6a6a6a"/><path d="M510.6 454.3 V509 H569" fill="none" stroke="#6a6a6a" stroke-width="1.3"/><circle cx="532" cy="469" r="8" fill="#6a6a6a"/><circle cx="532" cy="497" r="9.5" fill="#fff" stroke="#6a6a6a" stroke-width="1.3"/><path d="M504 533 V557 H530" fill="none" stroke="#6a6a6a" stroke-width="1.2"/><circle cx="511.8" cy="545.9" r="0.9" fill="#8a8a8a"/><circle cx="514.4" cy="547.1" r="0.9" fill="#8a8a8a"/><circle cx="519.5" cy="536.3" r="0.9" fill="#8a8a8a"/><circle cx="507.3" cy="551.7" r="0.9" fill="#8a8a8a"/><circle cx="512.2" cy="539.7" r="0.9" fill="#8a8a8a"/><circle cx="526.9" cy="544.4" r="0.9" fill="#8a8a8a"/><circle cx="523.7" cy="544.5" r="0.9" fill="#8a8a8a"/><circle cx="519.8" cy="538.0" r="0.9" fill="#8a8a8a"/><circle cx="519.7" cy="552.4" r="0.9" fill="#8a8a8a"/><circle cx="517.5" cy="549.8" r="0.9" fill="#8a8a8a"/><circle cx="520.4" cy="536.3" r="0.9" fill="#8a8a8a"/><circle cx="522.2" cy="546.8" r="0.9" fill="#8a8a8a"/><circle cx="513.0" cy="535.6" r="0.9" fill="#8a8a8a"/><circle cx="524.3" cy="544.5" r="0.9" fill="#8a8a8a"/><circle cx="521.4" cy="552.6" r="0.9" fill="#8a8a8a"/><circle cx="521.3" cy="553.4" r="0.9" fill="#8a8a8a"/><circle cx="514.9" cy="551.0" r="0.9" fill="#8a8a8a"/><circle cx="515.9" cy="553.7" r="0.9" fill="#8a8a8a"/><circle cx="524.6" cy="536.9" r="0.9" fill="#8a8a8a"/><circle cx="509.7" cy="539.3" r="0.9" fill="#8a8a8a"/><circle cx="526.3" cy="543.7" r="0.9" fill="#8a8a8a"/><circle cx="519.5" cy="541.0" r="0.9" fill="#8a8a8a"/><circle cx="517.1" cy="542.7" r="0.9" fill="#8a8a8a"/><circle cx="514.0" cy="546.7" r="0.9" fill="#8a8a8a"/><circle cx="518.7" cy="553.1" r="0.9" fill="#8a8a8a"/><circle cx="520.6" cy="553.6" r="0.9" fill="#8a8a8a"/></svg>
<div class="r" style="left:527.9px;top:322.9px;width:318.8px;height:258.3px;background:#ffffff;border:1px solid #bdbdbd;box-shadow:2px 2px 3px rgba(0,0,0,0.12);"></div>
<div class="t" style="left:545.20px;top:334.80px;font-size:17.6px;color:#444444;font-weight:bold;transform:scaleX(1.0020);">Scatter</div>
<div class="t" style="left:545.20px;top:367.79px;font-size:17.5px;color:#505050;transform:scaleX(1.0015);">Use this chart type to:</div>
<div class="t" style="left:545.20px;top:389.79px;font-size:17.5px;color:#505050;transform:scaleX(1.0045);">• Compare at least two sets of</div>
<div class="t" style="left:545.20px;top:411.89px;font-size:17.5px;color:#505050;transform:scaleX(0.9930);">values or pairs of data.</div>
<div class="t" style="left:545.20px;top:434.89px;font-size:17.5px;color:#505050;transform:scaleX(1.0013);">• Show relationships between sets</div>
<div class="t" style="left:545.20px;top:456.89px;font-size:17.5px;color:#505050;transform:scaleX(0.9894);">of values</div>
<div class="t" style="left:545.20px;top:501.59px;font-size:17.5px;color:#505050;transform:scaleX(0.9814);">Use it when:</div>
<div class="t" style="left:545.20px;top:525.29px;font-size:17.5px;color:#505050;transform:scaleX(0.9773);">• The data represents separate</div>
<div class="t" style="left:545.20px;top:546.59px;font-size:17.5px;color:#505050;transform:scaleX(1.0008);">measurements.</div>
</body></html>
